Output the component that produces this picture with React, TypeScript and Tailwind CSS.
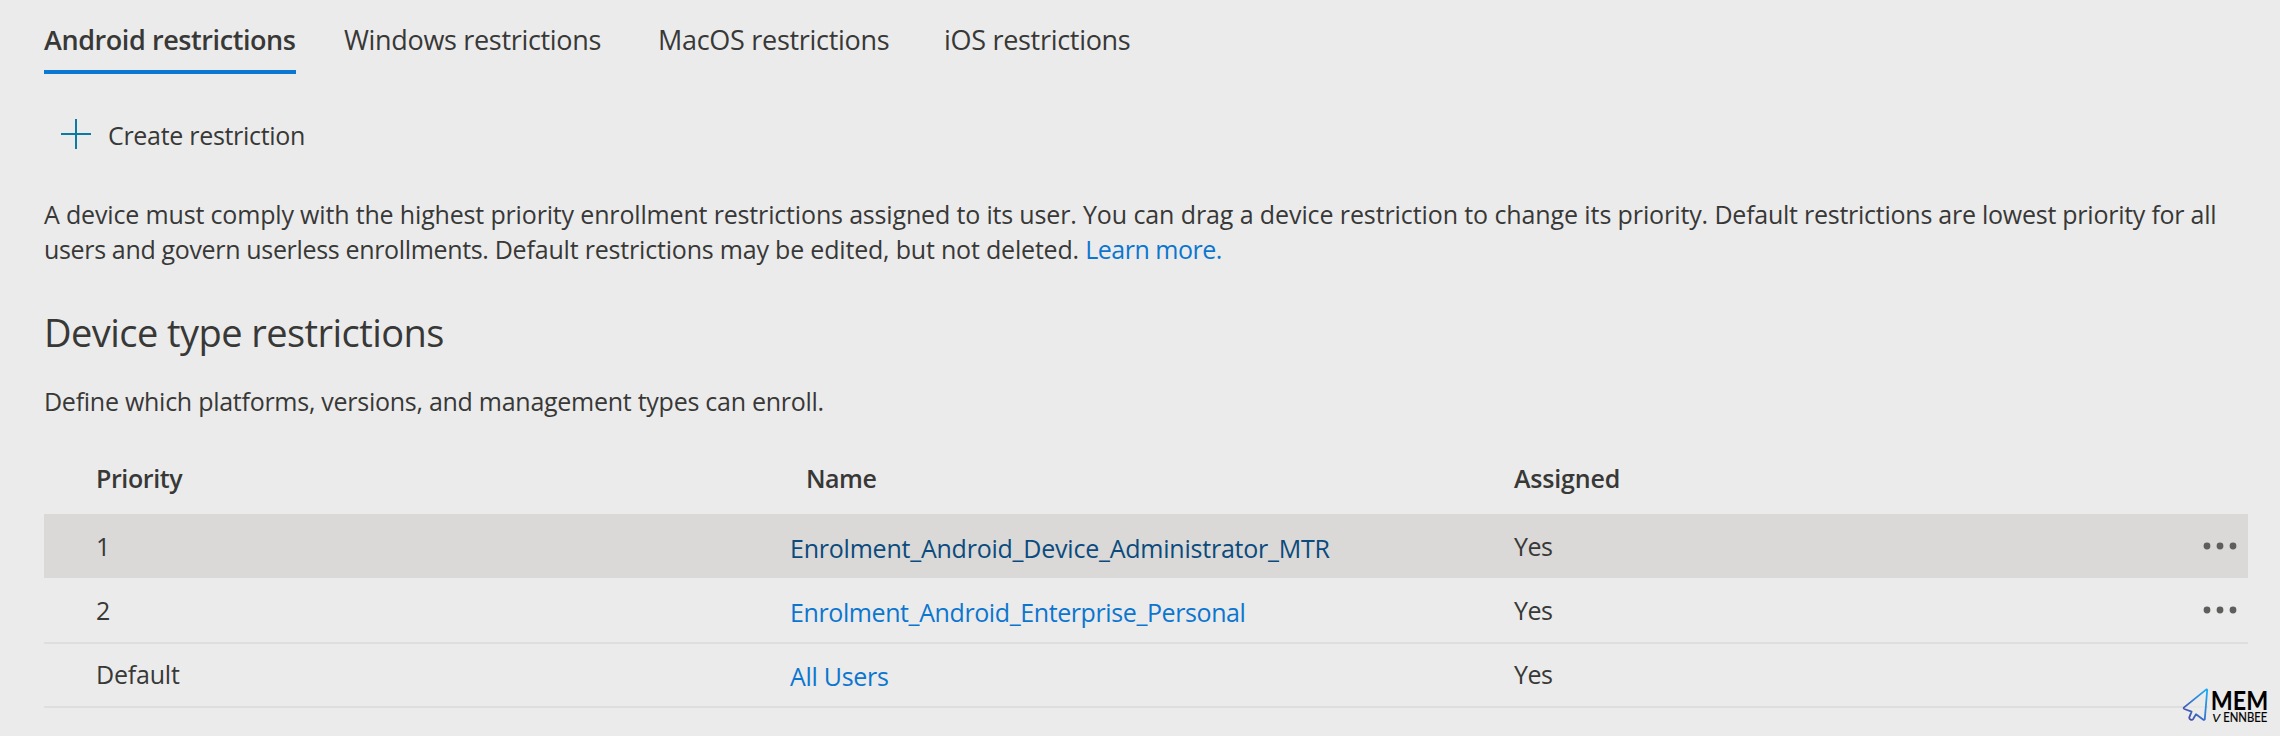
const tabs = [
  { label: "Android restrictions", active: true, tracking: "tracking-[-0.416px]" },
  { label: "Windows restrictions", active: false, tracking: "tracking-[-0.32px]" },
  { label: "MacOS restrictions", active: false, tracking: "tracking-[-0.29px]" },
  { label: "iOS restrictions", active: false, tracking: "tracking-[-0.3px]" },
];

const rows = [
  {
    priority: "1",
    name: "Enrolment_Android_Device_Administrator_MTR",
    assigned: "Yes",
    menu: true,
    row: "h-16 bg-[#dad9d7]",
    link: "text-[#0b4a7d] tracking-[-0.227px]",
  },
  {
    priority: "2",
    name: "Enrolment_Android_Enterprise_Personal",
    assigned: "Yes",
    menu: true,
    row: "h-[66px] border-b-2 border-[#dedede]",
    link: "text-[#0b76cf] tracking-[-0.4px]",
  },
  {
    priority: "Default",
    name: "All Users",
    assigned: "Yes",
    menu: false,
    row: "h-16 border-b-2 border-[#dedede] pb-[2px]",
    link: "text-[#0b76cf] tracking-[-0.3px]",
  },
];

function PlusIcon() {
  return (
    <svg width="30" height="30" viewBox="0 0 30 30" className="relative -top-px shrink-0">
      <path d="M15 0V30M0 15H30" stroke="#0a7ca3" strokeWidth="2" />
    </svg>
  );
}

function MoreIcon() {
  return (
    <svg width="34" height="8" viewBox="0 0 34 8" fill="#5f5e5d">
      <circle cx="4" cy="4" r="3.4" />
      <circle cx="17" cy="4" r="3.4" />
      <circle cx="30" cy="4" r="3.4" />
    </svg>
  );
}

function Watermark() {
  return (
    <svg width="96" height="44" viewBox="0 0 96 44" className="absolute top-[684px] left-[2176px] overflow-visible">
      <defs>
        <linearGradient id="pointer" x1="8" y1="30" x2="31" y2="8" gradientUnits="userSpaceOnUse">
          <stop offset="0" stopColor="#4a4ba6" />
          <stop offset="0.5" stopColor="#2f7fd6" />
          <stop offset="1" stopColor="#1fa8f3" />
        </linearGradient>
      </defs>
      <rect x="32" y="20" width="60" height="6" fill="#ebebeb" />
      <path
        d="M30.4 5.4L7.8 23.6Q7.4 24.6 8.4 25L15.6 27.6L13.2 33.6Q13.2 35 14.6 35.6Q16.2 36.4 17 35.2L20 30.2L27.4 35.8Q28.6 36.2 28.8 35L31.2 6Q31 5.2 30.4 5.4Z"
        fill="#ebebeb"
        fillOpacity="0.6"
        stroke="url(#pointer)"
        strokeWidth="1.8"
        strokeLinejoin="round"
      />
      <text x="34.8" y="25.6" fontFamily="Lato, sans-serif" fontWeight="700" fontSize="26" textLength="57.4" lengthAdjust="spacingAndGlyphs" fill="#000">
        MEM
      </text>
      <text x="36.2" y="37.8" fontFamily="Lato, sans-serif" fontStyle="italic" fontSize="12.4" textLength="8" lengthAdjust="spacingAndGlyphs" fill="#000" stroke="#000" strokeWidth="0.15">
        V
      </text>
      <text x="47.2" y="37.8" fontFamily="Lato, sans-serif" fontSize="12.4" textLength="44" lengthAdjust="spacingAndGlyphs" fill="#000" stroke="#000" strokeWidth="0.2">
        ENNBEE
      </text>
    </svg>
  );
}

const columns = "grid grid-cols-[694px_723px_1fr_auto] items-center pl-[52px] pr-[11px]";

export default function App() {
  return (
    <div className="relative h-[736px] w-[2280px] overflow-hidden bg-[#ebebeb] pr-8 pl-11 font-['Open_Sans',sans-serif] text-[25px] leading-9 text-[#383837]">
      <nav className="grid grid-cols-[300px_314px_286px_auto] pt-5 text-[27px] leading-[39px]">
        {tabs.map((tab) => (
          <div key={tab.label} className="flex">
            <span
              className={
                "border-b-4 pb-[11px] whitespace-nowrap " +
                tab.tracking +
                (tab.active ? " w-[252px] border-[#0b78d4] font-semibold" : " border-transparent")
              }
            >
              {tab.label}
            </span>
          </div>
        ))}
      </nav>

      <button className="mt-[41px] ml-[17px] flex h-10 items-center gap-[17px] tracking-[-0.3px]">
        <PlusIcon />
        Create restriction
      </button>

      <p className="mt-[42px] leading-[35px] whitespace-nowrap">
        <span className="block tracking-[-0.163px]">
          A device must comply with the highest priority enrollment restrictions assigned to its user.{" "}
          <span className="tracking-[-0.1px]">You can drag a device restriction to change its priority. </span>
          <span className="tracking-[-0.25px]">Default restrictions are lowest priority for all</span>
        </span>
        <span className="block tracking-[-0.34px]">
          users and govern userless enrollments.{" "}
          <span className="tracking-[-0.19px]">Default restrictions may be edited, but not deleted. </span>
          <a className="tracking-[-0.5px] text-[#0b76cf]">Learn more.</a>
        </span>
      </p>

      <h2 className="mt-[41px] text-[38px] leading-[48px] tracking-[-0.56px]">Device type restrictions</h2>
      <p className="mt-[27px] tracking-[-0.265px]">Define which platforms, versions, and management types can enroll.</p>

      <div className="pt-[41px]">
        <div className={columns + " h-[54px] content-start font-semibold"}>
          <span className="tracking-[-0.4px]">Priority</span>
          <span className="pl-4 tracking-[-0.5px]">Name</span>
          <span className="pl-px tracking-[-0.19px]">Assigned</span>
        </div>
        {rows.map((r) => (
          <div key={r.priority} className={columns + " " + r.row}>
            <span className="tracking-[-0.2px]">{r.priority}</span>
            <a className={"pt-1 " + r.link}>{r.name}</a>
            <span className="pl-px tracking-[-0.5px]">{r.assigned}</span>
            {r.menu && <MoreIcon />}
          </div>
        ))}
      </div>

      <Watermark />
    </div>
  );
}
